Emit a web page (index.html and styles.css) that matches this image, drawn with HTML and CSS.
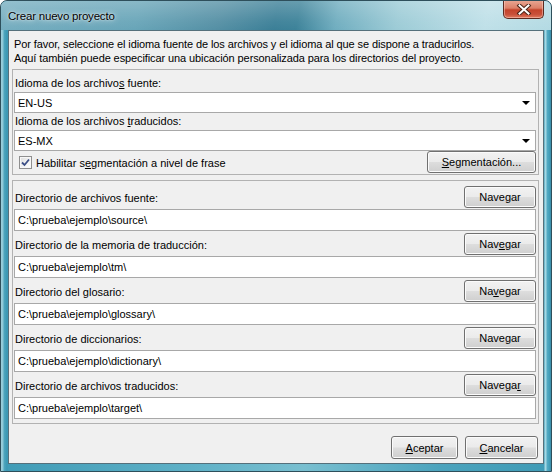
FILE: index.html
```html
<!DOCTYPE html>
<html lang="es">
<head>
<meta charset="utf-8">
<title>Crear nuevo proyecto</title>
<link rel="stylesheet" href="styles.css">
</head>
<body>
<div class="window">
  <div class="titlebar">
    <span class="title">Crear nuevo proyecto</span>
    <div class="close">
      <svg width="16" height="11" viewBox="0 0 16 11">
        <path d="M3.5 1.5 L12.5 9.5 M12.5 1.5 L3.5 9.5" stroke="#4a2418" stroke-width="4" stroke-linecap="square" fill="none"/>
        <path d="M3.5 1.5 L12.5 9.5 M12.5 1.5 L3.5 9.5" stroke="#ffffff" stroke-width="2" stroke-linecap="square" fill="none"/>
      </svg>
    </div>
  </div>
  <div class="client">
    <p class="intro">Por favor, seleccione el idioma fuente de los archivos y el idioma al que se dispone a traducirlos.<br>Aquí también puede especificar una ubicación personalizada para los directorios del proyecto.</p>

    <div class="group lang">
      <div class="lbl">Idioma de los archivo<u>s</u> fuente:</div>
      <div class="combo"><span>EN-US</span><span class="arrow"></span></div>
      <div class="lbl">Idioma de los archivos <u>t</u>raducidos:</div>
      <div class="combo"><span>ES-MX</span><span class="arrow"></span></div>
      <div class="checkrow">
        <label class="check">
          <span class="box">
            <svg width="9" height="9" viewBox="0 0 9 9"><path d="M1 4.5 L3.5 7 L8 1.5" stroke="#3c4f86" stroke-width="1.8" fill="none"/></svg>
          </span>
          <span class="checktext">Habilitar s<u>e</u>gmentación a nivel de frase</span>
        </label>
        <button class="btn seg"><u>S</u>egmentación...</button>
      </div>
    </div>

    <div class="group dirs">
      <div class="dirrow">
        <div class="head"><span>Directorio de archivos fuente:</span><button class="btn nav">Navegar</button></div>
        <div class="field">C:\prueba\ejemplo\source\</div>
      </div>
      <div class="dirrow">
        <div class="head"><span>Directorio de la memoria de traducción:</span><button class="btn nav">Nav<u>e</u>gar</button></div>
        <div class="field">C:\prueba\ejemplo\tm\</div>
      </div>
      <div class="dirrow">
        <div class="head"><span>Directorio del glosario:</span><button class="btn nav">Na<u>v</u>egar</button></div>
        <div class="field">C:\prueba\ejemplo\glossary\</div>
      </div>
      <div class="dirrow">
        <div class="head"><span>Directorio de diccionarios:</span><button class="btn nav">Navegar</button></div>
        <div class="field">C:\prueba\ejemplo\dictionary\</div>
      </div>
      <div class="dirrow">
        <div class="head"><span>Directorio de archivos traducidos:</span><button class="btn nav">Navega<u>r</u></button></div>
        <div class="field">C:\prueba\ejemplo\target\</div>
      </div>
    </div>

    <div class="footer">
      <button class="btn ok"><u>A</u>ceptar</button>
      <button class="btn cancel"><u>C</u>ancelar</button>
    </div>
  </div>
</div>
</body>
</html>
```

FILE: styles.css
```css
* { box-sizing: border-box; }
html, body { margin: 0; padding: 0; }
body {
  width: 552px;
  height: 472px;
  overflow: hidden;
  background: #ffffff;
  font-family: "Liberation Sans", Arial, sans-serif;
  font-size: 11px;
  color: #000;
}
u { text-decoration: underline; text-underline-offset: 1px; }

.window {
  width: 552px;
  height: 472px;
  border: 1px solid #2e4f5b;
  border-radius: 7px 7px 0 0;
  display: flex;
  flex-direction: column;
  position: relative;
  overflow: hidden;
  background:
    linear-gradient(90deg, #9ccfdc 0, #8cc7d6 2px, #4fa6be 3px, #3a97b3 6px, rgba(58,151,179,0) 7px),
    linear-gradient(270deg, #3a8ca8 0, #46a1bc 2px, #55abc3 4px, #a6d8e4 5px, #a6d8e4 6px, rgba(166,216,228,0) 7px),
    linear-gradient(90deg, #3f9bb6 0%, #5fb1c7 35%, #79bfd0 55%, #4ba3bd 80%, #3f9bb6 100%);
}

.titlebar {
  height: 29px;
  flex: none;
  display: flex;
  align-items: center;
  padding-left: 7px;
  position: relative;
  background:
    linear-gradient(180deg, rgba(255,255,255,0.22) 0, rgba(255,255,255,0.05) 20px, rgba(255,255,255,0) 29px),
    linear-gradient(100deg, #76aec0 0%, #68a5b8 25%, #548fa4 40%, #3b7f97 50%, #3c8299 54%, #6fadbf 61%, #9ccbd6 72%, #bfe0e8 88%, #b3dae3 100%);
}
.title {
  font-size: 11.5px;
  letter-spacing: -0.2px;
  color: #000;
  text-shadow: 0 0 6px rgba(255,255,255,0.9), 0 0 2px rgba(255,255,255,0.8);
}
.close {
  position: absolute;
  top: -1px;
  right: 7px;
  width: 41px;
  height: 19px;
  border: 1px solid #5c2a20;
  border-top: none;
  border-radius: 0 0 5px 5px;
  background: linear-gradient(180deg, #e9a996 0%, #dc8068 45%, #c4432a 55%, #c9503a 80%, #e07a5e 100%);
  box-shadow: inset 0 0 0 1px rgba(255,220,210,0.45);
  display: flex;
  align-items: center;
  justify-content: center;
}

.client {
  flex: 1;
  margin: 0 7px 7px 7px;
  background: #f0f0f0;
  border: 1px solid #55707b;
  display: flex;
  flex-direction: column;
}

.intro {
  margin: 0;
  padding: 6px 0 0 5px;
  line-height: 14px;
  letter-spacing: -0.1px;
}

.group {
  border: 1px solid #b2b2b2;
  margin: 4px 4px 0 3px;
  padding: 5px 1px 1px 1px;
}

.lbl {
  height: 17px;
  line-height: 17px;
  padding-left: 1px;
}

.combo {
  height: 21px;
  margin-right: 1px;
  background: #fff;
  border: 1px solid #a8a8a8;
  display: flex;
  align-items: center;
  justify-content: space-between;
  padding: 0 5px 0 3px;
}
.arrow {
  width: 0;
  height: 0;
  border-left: 4px solid transparent;
  border-right: 4px solid transparent;
  border-top: 4px solid #000;
  margin-top: 1px;
}

.checkrow {
  height: 22px;
  display: flex;
  align-items: center;
  justify-content: space-between;
}
.check {
  display: flex;
  align-items: center;
  gap: 4px;
  padding-left: 5px;
  margin-top: 1px;
}
.box {
  width: 13px;
  height: 13px;
  border: 1px solid #8f8f8f;
  background: linear-gradient(135deg, #dcdcdc 0%, #f4f4f4 60%, #ffffff 100%);
  box-shadow: inset 0 0 0 1px #f7f7f7;
  display: flex;
  align-items: center;
  justify-content: center;
}
.box svg { display: block; }

.btn {
  height: 22px;
  padding: 0;
  border: 1px solid #707070;
  border-radius: 3px;
  background: linear-gradient(180deg, #f2f2f2 0%, #ebebeb 48%, #dddddd 52%, #cfcfcf 100%);
  box-shadow: inset 0 0 0 1px #fbfbfb;
  font-family: inherit;
  font-size: 11px;
  color: #000;
  text-align: center;
}
.seg { width: 109px; margin-right: 1px; }
.nav { width: 72px; margin-right: 1px; }

.dirs {
  margin-top: 5px;
  padding: 5px 1px 4px 1px;
}
.dirrow { margin-bottom: 2px; }
.dirrow:last-child { margin-bottom: 0; }
.head {
  height: 22px;
  display: flex;
  align-items: center;
  justify-content: space-between;
  padding-left: 1px;
}
.head span { padding-top: 2px; }
.field {
  height: 22px;
  margin-top: 1px;
  margin-right: 1px;
  background: #fff;
  border: 1px solid #a8a8a8;
  line-height: 20px;
  padding-left: 3px;
}

.footer {
  margin-top: auto;
  display: flex;
  justify-content: flex-end;
  gap: 7px;
  padding: 0 5px 4px 0;
}
.footer .btn { height: 23px; }
.ok { width: 67px; }
.cancel { width: 73px; }
```
